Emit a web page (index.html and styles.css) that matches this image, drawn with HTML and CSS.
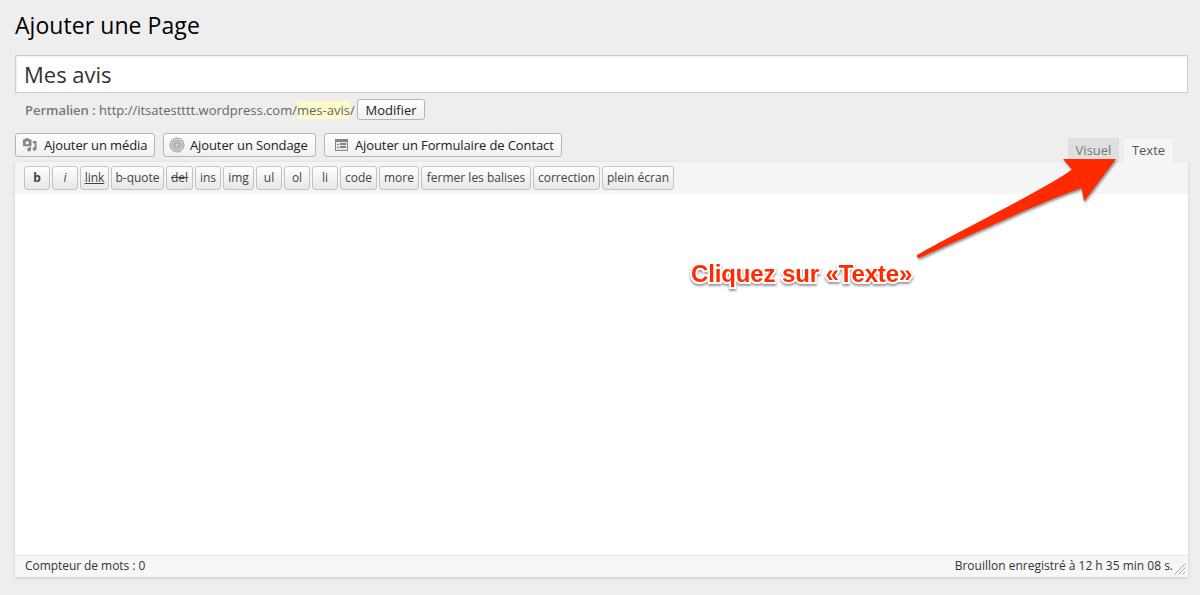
FILE: index.html
```html
<!DOCTYPE html>
<html lang="fr">
<head>
<meta charset="utf-8">
<title>Ajouter une Page</title>
<link rel="stylesheet" href="styles.css">
</head>
<body>
<main class="page">
  <h1 class="heading">Ajouter une Page</h1>
  <div class="title-box">Mes avis</div>
  <div class="permalink">
    <span class="url"><strong>Permalien :</strong> http://itsatestttt.wordpress.com/<mark>mes-avis</mark>/</span>
    <button class="button edit">Modifier</button>
  </div>
  <div class="tools">
    <div class="media">
      <button class="button add-media">
        <svg class="icon" width="16" height="16" viewBox="0 0 16 16"><path fill="#858585" fill-rule="evenodd" d="M1 2.500h1.500l.8-1.300h3.400l.8 1.300H9.500v6.700H1zM5.200 4a1.700 1.700 0 1 0 0 3.400 1.700 1.700 0 0 0 0-3.400zM10.800 4H14.500v7.800a1.900 1.900 0 1 1-1.900-1.900V6.300h-1.800zM7.200 10H9v2.600A1.900 1.900 0 1 1 7.200 10.700z"/></svg>
        <span>Ajouter un média</span></button>
      <button class="button add-poll">
        <svg class="icon" width="16" height="16" viewBox="0 0 16 16"><circle cx="8" cy="8" r="7" fill="#dcdcdc" stroke="#999"/><circle cx="8" cy="8" r="5.500" fill="#b8b8b8"/><circle cx="8" cy="8" r="3.500" fill="#b0b0b0" stroke="#c8c8c8" stroke-width=".7"/><circle cx="8" cy="8" r="1.200" fill="#d4d4d4"/></svg>
        <span>Ajouter un Sondage</span></button>
      <button class="button add-form">
        <svg class="icon" width="13" height="12" viewBox="0 0 13 12"><path fill="#858585" d="M0 0h13v12H0z"/><path fill="#e6e6e6" d="M1 3h11v8H1z"/><path fill="#858585" d="M2 5h2v1H2zm3-1h6v2H5zM2 8h2v1H2zm3-1h6v2H5z"/></svg>
        <span>Ajouter un Formulaire de Contact</span></button>
    </div>
    <div class="tabs"><span class="tab visual">Visuel</span><span class="tab active">Texte</span></div>
  </div>
  <section class="editor">
    <div class="quicktags">
      <button class="tag w26"><b>b</b></button>
      <button class="tag w26"><i>i</i></button>
      <button class="tag w29"><u>link</u></button>
      <button class="tag w53">b-quote</button>
      <button class="tag w27"><s>del</s></button>
      <button class="tag w26">ins</button>
      <button class="tag w31">img</button>
      <button class="tag w26">ul</button>
      <button class="tag w26">ol</button>
      <button class="tag w26">li</button>
      <button class="tag w37">code</button>
      <button class="tag w40">more</button>
      <button class="tag w110">fermer les balises</button>
      <button class="tag w67">correction</button>
      <button class="tag w72">plein écran</button>
    </div>
    <div class="content"></div>
    <footer class="status">
      <span class="count">Compteur de mots : 0</span>
      <span class="saved">Brouillon enregistré à 12 h 35 min 08 s.</span>
      <svg class="grip" width="12" height="12" viewBox="0 0 12 12"><path d="M.5 11.500l11-11M4.500 11.500l7-7M8.500 11.500l3-3" stroke="#aaa" fill="none"/></svg>
    </footer>
  </section>
  <svg class="arrow" width="220" height="120" viewBox="900 150 220 120"><path fill="#ff2a00" d="M1063 159H1116L1084 201.500L1081.500 188C1050 199 1010 217 919 258Q916 258 917 255C970 225 1040 192 1072 169.500z"/></svg>
  <div class="callout">Cliquez sur «Texte»</div>
</main>
</body>
</html>
```
FILE: styles.css
```css
* { box-sizing: border-box; }
body {
  margin: 0;
  background: #eee;
  font: 13px/20px "Open Sans", "Noto Sans", sans-serif;
  color: #333;
}
.page {
  position: relative;
  height: 595px;
  padding: 0 12px 0 15px;
  overflow: hidden;
  white-space: nowrap;
}
.heading {
  height: 55px;
  margin: 0;
  padding-top: 8px;
  font-size: 23px;
  line-height: 34px;
  font-weight: 400;
  letter-spacing: .06px;
  color: #000;
}
.title-box {
  height: 38px;
  padding: 0 8px;
  border: 1px solid #ccc;
  background: #fff;
  box-shadow: inset 1px 1px 2px rgba(0, 0, 0, .07);
  font-size: 22px;
  line-height: 37px;
}
.permalink {
  display: flex;
  height: 40px;
  padding: 6px 0 0 10px;
  color: #666;
}
.url { width: 332px; line-height: 22px; }
.url strong { font-weight: 600; color: #777; letter-spacing: -.03px; }
.url mark { background: #fffbcc; color: #666; }
.button {
  display: flex;
  align-items: center;
  height: 24px;
  padding: 0;
  border: 1px solid #b5b5b5;
  border-radius: 3px;
  background: linear-gradient(#fefefe, #f1f1f1);
  font: inherit;
  color: #222;
  white-space: nowrap;
}
.edit { justify-content: center; width: 68px; height: 21px; }
.tools { display: flex; justify-content: space-between; height: 29px; }
.media { display: flex; gap: 8px; }
.media .button { letter-spacing: -.11px; }
.add-media { width: 140px; padding-left: 6px; gap: 6px; }
.add-poll { width: 153px; padding-left: 5px; gap: 5px; }
.add-form { width: 238px; padding-left: 10px; gap: 7px; }
.icon { flex: none; }
.tabs { display: flex; gap: 5px; padding: 5px 15px 0 0; }
.tab { height: 24px; line-height: 25px; text-align: center; }
.visual { width: 51px; background: #dfdfdf; color: #777; }
.active {
  width: 49px;
  background: #f5f5f5;
  color: #555;
  box-shadow: 0 -1px 1px rgba(0, 0, 0, .04);
}
.editor { height: 415px; box-shadow: 0 1px 3px rgba(0, 0, 0, .16); }
.quicktags {
  display: flex;
  gap: 2px;
  height: 32px;
  padding: 4px 9px;
  background: #f5f5f5;
}
.tag {
  height: 24px;
  padding: 0;
  border: 1px solid #c3c3c3;
  border-radius: 3px;
  background: linear-gradient(#fff, #e6e6e6);
  font: 12px/20px "Open Sans", "Noto Sans", sans-serif;
  color: #444;
  white-space: nowrap;
}
.tag b { font-weight: 700; }
.w26 { width: 26px; }
.w27 { width: 27px; }
.w29 { width: 29px; }
.w31 { width: 31px; }
.w37 { width: 37px; }
.w40 { width: 40px; }
.w53 { width: 53px; }
.w67 { width: 67px; }
.w72 { width: 72px; }
.w110 { width: 110px; }
.content { height: 361px; background: #fff; }
.status {
  display: flex;
  height: 22px;
  padding: 0 2px 0 10px;
  border-top: 1px solid #e5e5e5;
  background: #f7f7f7;
  font-size: 12px;
  line-height: 20px;
}
.count { letter-spacing: -.06px; }
.saved { margin-left: auto; }
.grip { margin: 7px 0 0 1px; }
.arrow {
  position: absolute;
  left: 900px;
  top: 150px;
  filter: drop-shadow(1px 2px 1px rgba(0, 0, 0, .4));
}
.callout {
  position: absolute;
  left: 691px;
  top: 259px;
  font: bold 24px/30px "Liberation Sans", Arial, sans-serif;
  letter-spacing: -.13px;
  color: #ff2a00;
  -webkit-text-stroke: 4px #fff;
  paint-order: stroke fill;
  filter: drop-shadow(0 2px 1px rgba(0, 0, 0, .4));
}
```
